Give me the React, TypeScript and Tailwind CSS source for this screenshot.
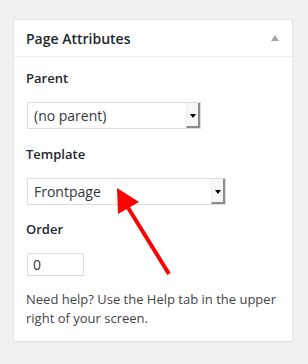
import React from "react";

function FakeSelect({ value, width }: { value: string; width: string }) {
  return (
    <div className={`flex h-[27px] ${width} border border-[#dddddd] bg-white`}>
      <div className="flex-1 pl-[6px] text-[14px] leading-[25px] text-[#32373c]">{value}</div>
      <div className="relative w-[14px] bg-[#f7f7f7] border-r-2 border-b-2 border-[#8c8c8c] border-l border-l-[#eeeeee]">
        <div className="absolute left-[3px] top-[11px] w-0 h-0 border-l-[3px] border-r-[3px] border-t-[4px] border-l-transparent border-r-transparent border-t-black" />
      </div>
    </div>
  );
}

export default function App() {
  return (
    <div
      className="relative w-[308px] h-[364px] bg-[#f1f1f1] pt-[19px] pl-[13px]"
      style={{ fontFamily: '"Open Sans", "Noto Sans", sans-serif' }}
    >
      <div className="w-[280px] border border-[#e5e5e5] bg-white shadow-[0_1px_1px_rgba(0,0,0,0.04)]">
        <div className="flex h-[37px] items-center justify-between border-b border-[#eeeeee] pl-[12px] pr-[13px]">
          <div className="text-[14px] font-semibold text-[#23282d]">Page Attributes</div>
          <div className="w-0 h-0 border-l-[4px] border-r-[4px] border-b-[6px] border-l-transparent border-r-transparent border-b-[#a0a5aa]" />
        </div>
        <div className="flex flex-col pt-[11px] pb-[13px] pl-[12px] pr-[12px]">
          <div className="h-[20px] text-[13px] leading-[20px] font-semibold text-[#23282d]">Parent</div>
          <div className="mt-[14px] ml-[1px]">
            <FakeSelect value="(no parent)" width="w-[174px]" />
          </div>
          <div className="mt-[15px] h-[20px] text-[13px] leading-[20px] font-semibold text-[#23282d]">Template</div>
          <div className="mt-[14px] ml-[1px]">
            <FakeSelect value="Frontpage" width="w-[199px]" />
          </div>
          <div className="mt-[14px] h-[20px] text-[13px] leading-[20px] font-semibold text-[#23282d]">Order</div>
          <div className="mt-[14px] ml-[1px] flex h-[23px] w-[57px] items-center border border-[#dddddd] bg-white pl-[5px] text-[14px] text-[#32373c]">
            0
          </div>
          <p className="mt-[14px] text-[13px] leading-[19px] text-[#444444]">
            Need help? Use the Help tab in the upper right of your screen.
          </p>
        </div>
      </div>
      <svg className="absolute left-0 top-0 pointer-events-none" width="308" height="364" viewBox="0 0 308 364">
        <line x1="127" y1="206" x2="169" y2="274" stroke="#ff0000" strokeWidth="4" />
        <polygon points="117,188 139,202 118,214" fill="#ff0000" />
      </svg>
    </div>
  );
}
